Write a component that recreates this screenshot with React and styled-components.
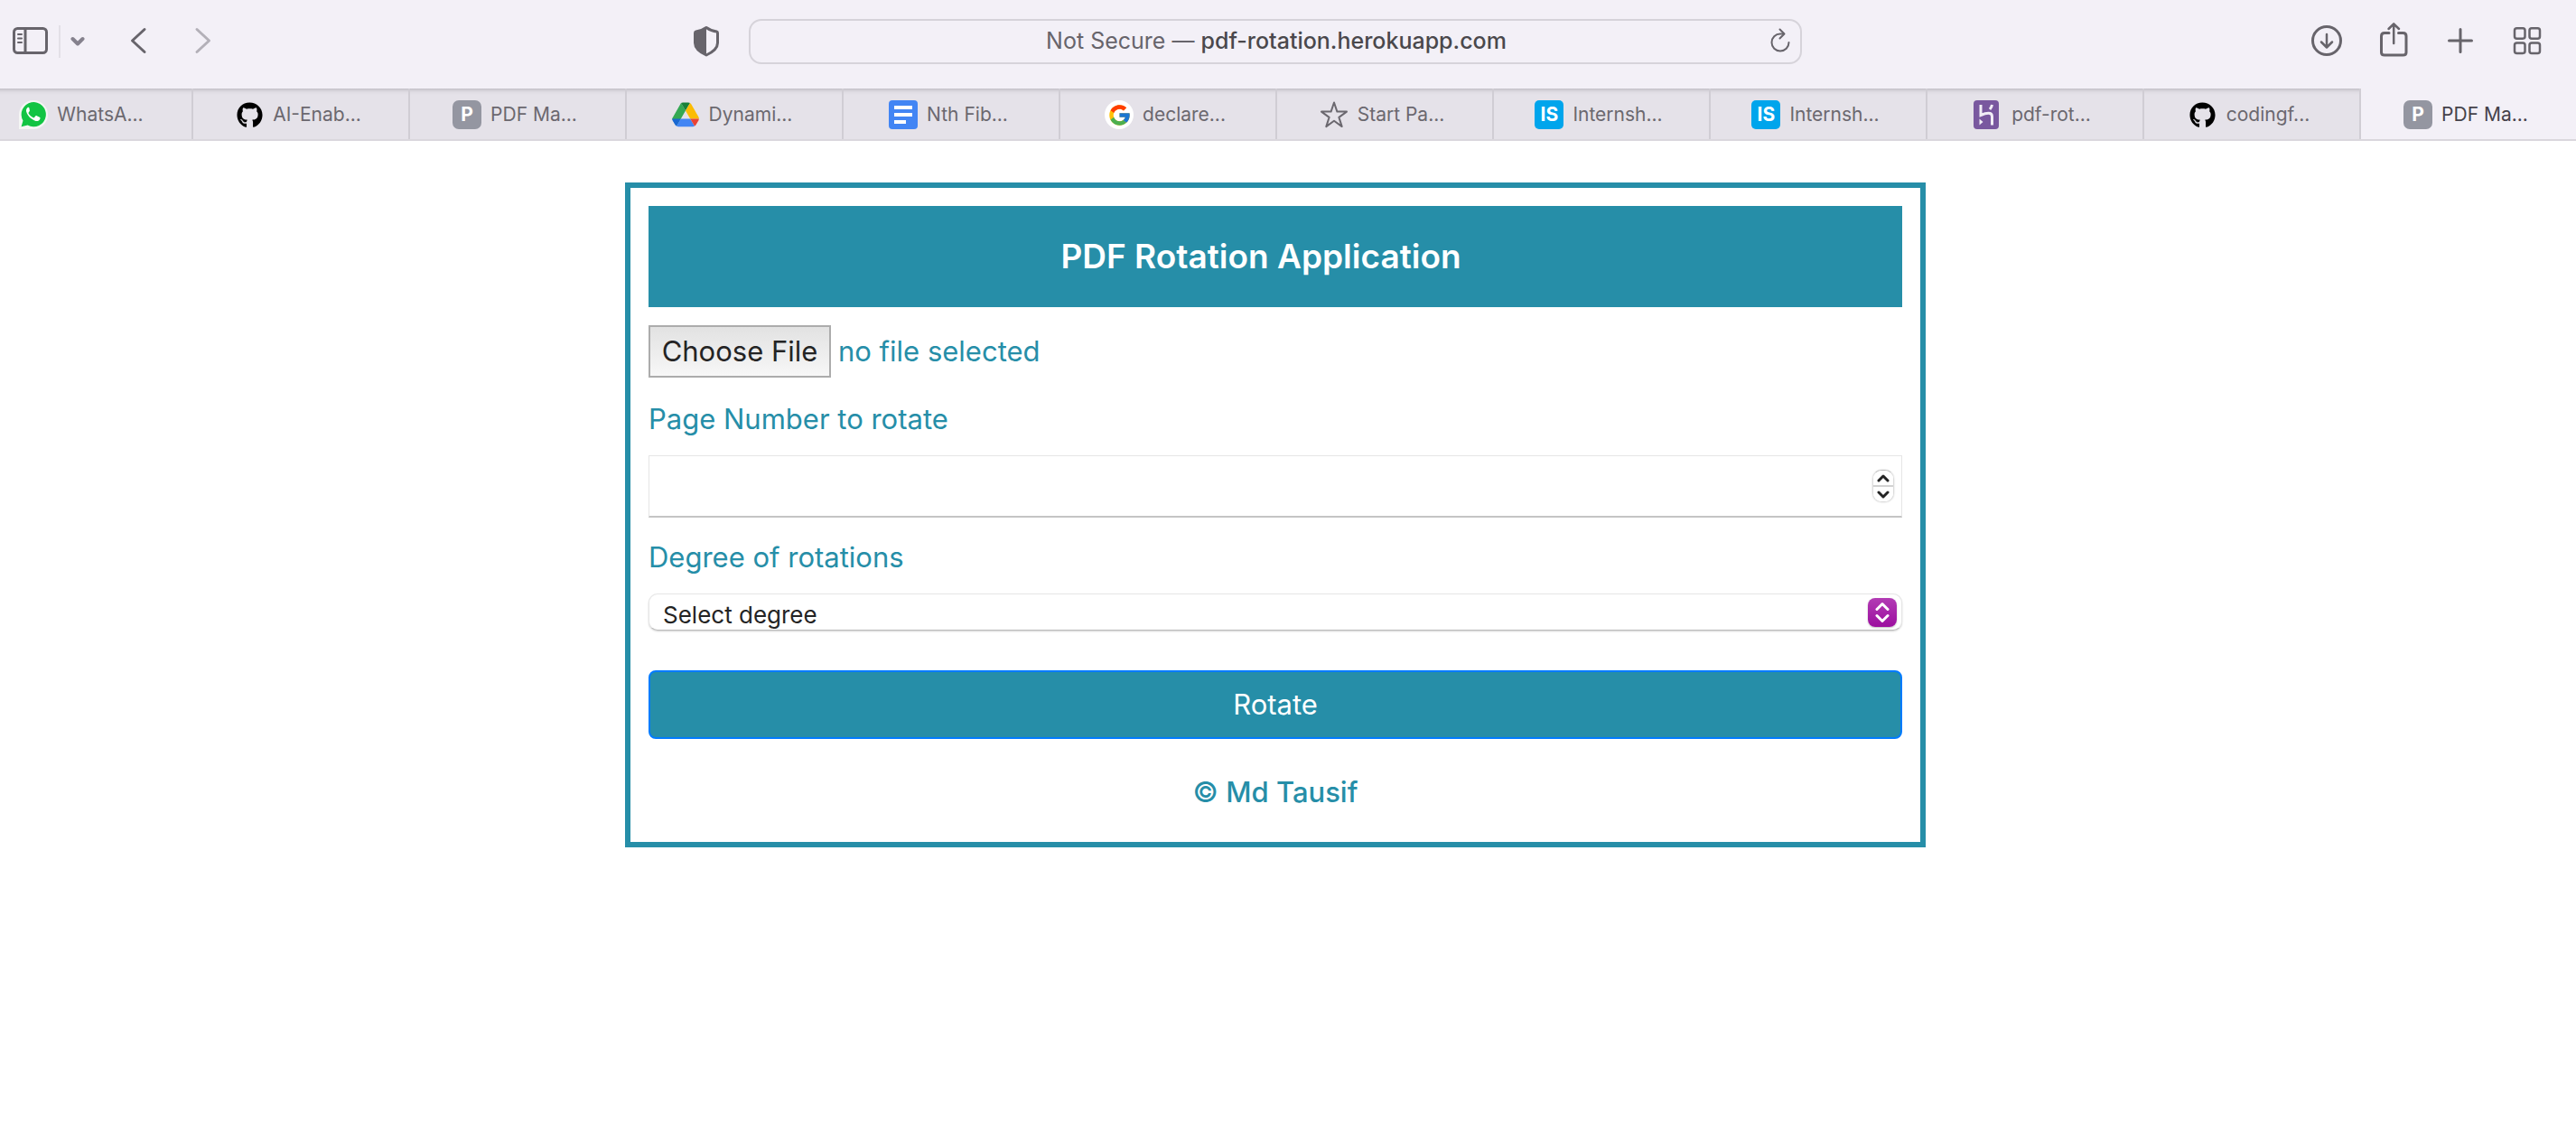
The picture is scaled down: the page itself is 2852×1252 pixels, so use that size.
import React from "react";
import styled, { createGlobalStyle } from "styled-components";
import { FaGithub } from "react-icons/fa";
import { FcGoogle } from "react-icons/fc";

const TEAL = "#268ea8";
const INK = "#67646b";

const GlobalStyle = createGlobalStyle`
  *, *::before, *::after { box-sizing: border-box; }
  body {
    margin: 0;
    background: #fff;
    overflow-x: hidden;
    font-family: Inter, "Liberation Sans", sans-serif;
  }
  button, input, select { font: inherit; margin: 0; }
`;

/* The window's left edge sits just outside the viewport. */
const Window = styled.div`
  margin-left: -28px;
`;

/* ---------- Browser toolbar ---------- */

const Toolbar = styled.header`
  display: grid;
  grid-template-columns: 857fr 1166fr 857fr;
  align-items: center;
  padding: 21px 0 27px;
  background: #f3f0f7;
`;

const ToolGroup = styled.div`
  display: flex;
  align-items: center;
  gap: ${(p) => p.$gap}px;
`;

const LeftTools = styled.div`
  display: flex;
  align-items: center;
  justify-content: space-between;
  padding: 0 32px 0 42px;
`;

const RightTools = styled(ToolGroup)`
  justify-content: flex-end;
  padding-right: 37px;
`;

const ToolButton = styled.button`
  display: flex;
  padding: 0;
  border: 0;
  background: none;
  color: ${(p) => (p.$faded ? "#b3b0b8" : INK)};
`;

const ToolSvg = styled.svg`
  display: block;
  height: 50px;
  fill: none;
  stroke: currentColor;
  stroke-width: ${(p) => p.$weight || 3};
  stroke-linecap: round;
  stroke-linejoin: round;
`;

const Divider = styled.span`
  width: 2px;
  height: 36px;
  background: #e3e0e7;
`;

const AddressBar = styled.div`
  display: flex;
  align-items: center;
  height: 50px;
  padding: 0 10px 0 36px;
  border: 2px solid #d6d3da;
  border-radius: 14px;
`;

const AddressText = styled.button`
  flex: 1;
  padding: 0 0 2px;
  border: 0;
  background: none;
  color: #67646b;
  font-size: 25px;
  line-height: 32px;
  text-align: center;
  white-space: nowrap;
`;

const Host = styled.span`
  color: #4a484c;
  font-weight: 500;
`;

/* ---------- Tabs ---------- */

const TabBar = styled.nav`
  display: flex;
  border-bottom: 2px solid #dad7dd;
  background: #e5e2e9;
`;

const Tab = styled.a`
  display: flex;
  flex: 1 1 0;
  align-items: center;
  justify-content: center;
  gap: 10px;
  min-width: 0;
  height: 56px;
  padding: 2px 6px 0 0;
  border-left: 2px solid #d0cdd4;
  background: ${(p) =>
    p.$active
      ? "#f3f0f7"
      : "linear-gradient(#c2bfc7 0, #d3d0d7 2px, #dfdce3 4px, #e5e2e9 7px)"};
  color: ${(p) => (p.$active ? "#45424a" : "#6b686f")};
  font-size: 21px;
  line-height: 28px;
  text-decoration: none;
  white-space: nowrap;
`;

const Favicon = styled.span`
  display: flex;
  flex: none;
  align-items: center;
  justify-content: center;
  width: 32px;
  height: 32px;
  border-radius: ${(p) => p.$radius || 0}px;
  background: ${(p) => p.$bg || "transparent"};
  color: ${(p) => p.$color || "#fff"};
  font-size: 21px;
  font-weight: 700;
`;

/* ---------- Page ---------- */

const Page = styled.main`
  display: flex;
  justify-content: center;
  padding-top: 46px;
`;

const Card = styled.form`
  display: flex;
  flex-direction: column;
  width: 50%;
  padding: 20px 20px 31px;
  border: 6px solid ${TEAL};
  color: ${TEAL};
  font-size: 31px;
  line-height: 48px;
`;

const Title = styled.h1`
  margin: 0 0 20px;
  padding: 32px 32px 32px 0;
  background: ${TEAL};
  color: #fff;
  font-size: 37px;
  font-weight: 600;
  line-height: 48px;
  text-align: center;
`;

const FileRow = styled.div`
  display: flex;
  align-items: center;
  gap: 8px;
  margin-bottom: 22px;
`;

const FileInput = styled.input`
  width: 202px;
  height: 58px;
  overflow: hidden;
  color: transparent;

  &::file-selector-button {
    width: 202px;
    height: 58px;
    margin: 0;
    padding: 0;
    border: 2px solid #acacac;
    border-radius: 0;
    background: linear-gradient(#e2e2e2, #f7f7f7);
    color: #242424;
    font: inherit;
  }
`;

const Label = styled.label`
  margin-bottom: 16px;
`;

const NumberField = styled.div`
  display: flex;
  align-items: center;
  height: 69px;
  margin-bottom: 20px;
  padding-right: 8px;
  border: 1px solid #e6e6e6;
  border-bottom: 2px solid #c4c4c4;
`;

const NumberInput = styled.input`
  flex: 1;
  min-width: 0;
  height: 100%;
  padding: 0 16px;
  border: 0;
  outline: 0;
  background: none;
  color: #242424;
  appearance: textfield;

  &::-webkit-inner-spin-button { display: none; }
`;

const Stepper = styled.div`
  display: flex;
  flex-direction: column;
  width: 24px;
  height: 36px;
  border: 1px solid #dcdcdc;
  border-top-color: #bdbdbd;
  border-radius: 10px;
  box-shadow: 0 0 2px rgba(0, 0, 0, 0.18);
  overflow: hidden;
`;

const StepButton = styled.button`
  display: flex;
  flex: 1;
  align-items: center;
  justify-content: center;
  padding: 0;
  border: 0;
  background: #fff;
  color: #242424;

  & + & { border-top: 2px solid #d2d2d2; }
`;

const SelectWrap = styled.div`
  position: relative;
  margin-bottom: 44px;
`;

const Select = styled.select`
  display: block;
  width: 100%;
  height: 41px;
  padding: 6px 48px 0 15px;
  border: 1px solid #e6e6e6;
  border-bottom-color: #bcbcbc;
  border-radius: 10px;
  box-shadow: 0 1px 2px rgba(0, 0, 0, 0.18);
  background: #fff;
  color: #242424;
  font-size: 26px;
  line-height: 32px;
  appearance: none;
`;

const SelectBadge = styled.span`
  position: absolute;
  top: 5px;
  right: 6px;
  display: flex;
  align-items: center;
  justify-content: center;
  width: 32px;
  height: 32px;
  border-radius: 8px;
  background: linear-gradient(#b23bb4, #9c0f9f);
  box-shadow: 0 1px 2px rgba(0, 0, 0, 0.25);
  color: #fff;
  pointer-events: none;
`;

const Submit = styled.button`
  height: 76px;
  margin-bottom: 35px;
  padding: 0;
  border: 2px solid #007bff;
  border-radius: 8px;
  background: ${TEAL};
  color: #fff;
`;

const Footer = styled.footer`
  font-weight: 500;
  text-align: center;
`;

/* ---------- Drawings ---------- */

const Chevron = ({ up, width, height, weight }) => (
  <svg
    width={width}
    height={height}
    viewBox={`0 0 ${width} ${height}`}
    fill="none"
    stroke="currentColor"
    strokeWidth={weight}
    strokeLinecap="round"
    strokeLinejoin="round"
  >
    <path
      d={
        up
          ? `M2 ${height - 2} L${width / 2} 2 L${width - 2} ${height - 2}`
          : `M2 2 L${width / 2} ${height - 2} L${width - 2} 2`
      }
    />
  </svg>
);

const WhatsApp = () => (
  <Favicon>
    <svg width="32" height="32" viewBox="0 0 32 32">
      <path d="M0 32V16A16 16 0 1 1 16 32z" fill="#f4f6f4" />
      <path d="M2.6 29.2l1.9-6.600A13.600 13.600 0 1 1 9.600 27.600z" fill="#12c443" />
      <path
        d="M11.4 8.6c-.5-1-1.3-.9-2-.3-1.4 1.3-1.7 3-1.1 4.8 1.5 4.6 5.6 8.5 10.3 9.8 1.9.5 4-.4 4.7-2.2.4-1.1.3-1.6-.5-2l-3.1-1.5c-.6-.3-1-.2-1.4.3l-1.3 1.6c-.3.4-.7.4-1.2.2-2.3-1-4-2.6-5.2-4.7-.3-.5-.2-.8.1-1.2l1-1.3c.3-.4.3-.7.1-1.2z"
        fill="#fff"
      />
    </svg>
  </Favicon>
);

const GitHub = () => (
  <Favicon $color="#000">
    <FaGithub size={29} />
  </Favicon>
);

const PageLetter = () => (
  <Favicon $bg="#9496a1" $radius={7}>
    P
  </Favicon>
);

const Internshala = () => (
  <Favicon $bg="#00a5ec" $radius={5}>
    IS
  </Favicon>
);

const Drive = () => (
  <Favicon>
    <svg width="30" height="28" viewBox="0 0 30 28">
      <path d="M10 1l5 8.500L5.500 26Q4 25.500 3.200 24L.6 19.500Q0 18.500.3 18z" fill="#34a853" />
      <path d="M10 1Q10.800.5 12 .5h6q1.200 0 2 .5l-5 8.500z" fill="#188038" />
      <path d="M20 1q.8.500 1.400 1.500L29.400 16.500q.5 1 .4 2H20.200L15 9.500z" fill="#fbbc04" />
      <path d="M.2 18.500h9.600L5 26.500q-1-.5-1.600-1.500L.7 20.500Q.2 19.500.2 18.500z" fill="#1967d2" />
      <path d="M9.800 18.500h10.400l4.800 8q-.8.800-2 .8H7q-1.200 0-2-.8z" fill="#4285f4" />
      <path d="M20.200 18.500h9.600q0 1-.5 2l-2.700 4.500q-.6 1-1.600 1.500z" fill="#ea4335" />
    </svg>
  </Favicon>
);

const Docs = () => (
  <Favicon $bg="#4285f4" $radius={4}>
    <svg width="20" height="20" viewBox="0 0 20 20" fill="#fff">
      <path d="M0 0h20v4H0zM0 8h20v4H0zM0 16h13v4H0z" />
    </svg>
  </Favicon>
);

const Google = () => (
  <Favicon $bg="#fff" $radius={16}>
    <FcGoogle size={27} />
  </Favicon>
);

const Star = () => (
  <Favicon>
    <svg width="32" height="32" viewBox="0 0 32 32" fill="none" stroke="#6b686f" strokeWidth="2" strokeLinejoin="round">
      <path d="M16 2.500l3.400 10.100H30l-8.600 6.300 3.300 10.200L16 22.800l-8.700 6.300 3.300-10.200L2 12.600h10.600z" />
    </svg>
  </Favicon>
);

const Heroku = () => (
  <Favicon>
    <svg width="32" height="32" viewBox="0 0 32 32">
      <rect width="28" height="32" rx="4" fill="#79589f" />
      <path
        d="M8 5v11.500c4-1.700 6-2.200 8.500-2.200 2.800 0 4 1.400 4 3.700V27.500M20.500 5c-.3 1.800-1.200 3.500-2.500 5"
        fill="none"
        stroke="#f1eef6"
        strokeWidth="3"
      />
      <path d="M6.500 20.500v7l4-3.500z" fill="#f1eef6" />
    </svg>
  </Favicon>
);

const TABS = [
  { icon: WhatsApp, title: "WhatsA..." },
  { icon: GitHub, title: "AI-Enab..." },
  { icon: PageLetter, title: "PDF Ma..." },
  { icon: Drive, title: "Dynami..." },
  { icon: Docs, title: "Nth Fib..." },
  { icon: Google, title: "declare..." },
  { icon: Star, title: "Start Pa..." },
  { icon: Internshala, title: "Internsh..." },
  { icon: Internshala, title: "Internsh..." },
  { icon: Heroku, title: "pdf-rot..." },
  { icon: GitHub, title: "codingf..." },
  { icon: PageLetter, title: "PDF Ma...", active: true },
];

export default function App() {
  const pageNumber = React.useRef(null);

  return (
    <Window>
      <GlobalStyle />
      <Toolbar>
        <LeftTools>
          <ToolGroup $gap={50}>
            <ToolGroup $gap={11}>
              <ToolButton aria-label="Show sidebar">
                <ToolSvg width="40" viewBox="0 0 40 50">
                  <rect x="1.500" y="10.500" width="36" height="27" rx="4" />
                  <path d="M14 10.500v27" />
                  <path d="M6 17h4M6 21.500h4M6 26h4" strokeWidth="2" />
                </ToolSvg>
              </ToolButton>
              <Divider />
              <ToolButton aria-label="Tab groups">
                <ToolSvg width="16" viewBox="0 0 16 50" $weight={4}>
                  <path d="M2.500 22l5.500 5.500 5.500-5.500" stroke="#85818d" />
                </ToolSvg>
              </ToolButton>
            </ToolGroup>
            <ToolButton aria-label="Back">
              <ToolSvg width="20" viewBox="0 0 20 50">
                <path d="M16 11.500L2.500 24 16 36.500" />
              </ToolSvg>
            </ToolButton>
            <ToolButton aria-label="Forward" $faded>
              <ToolSvg width="20" viewBox="0 0 20 50">
                <path d="M4 11.500L17.500 24 4 36.500" />
              </ToolSvg>
            </ToolButton>
          </ToolGroup>
          <ToolButton aria-label="Privacy report">
            <ToolSvg width="30" viewBox="0 0 30 50">
              <path d="M15 9.500c4 2.800 8 4.200 11.500 4.500q1 .2 1 1.500v11c0 6-6 10.500-12.500 13.500C8.500 37 2.500 32.500 2.500 26.500v-11q0-1.300 1-1.500C7 13.700 11 12.300 15 9.500z" />
              <path d="M15 9.500V40C8.500 37 2.500 32.500 2.500 26.500v-11q0-1.300 1-1.500C7 13.700 11 12.300 15 9.500z" fill="currentColor" stroke="none" />
            </ToolSvg>
          </ToolButton>
        </LeftTools>

        <AddressBar>
          <AddressText>
            Not Secure — <Host>pdf-rotation.herokuapp.com</Host>
          </AddressText>
          <ToolButton aria-label="Reload">
            <ToolSvg width="24" viewBox="0 0 24 50" $weight={2}>
              <path d="M21.500 26a9.500 9.500 0 1 1-9.500-9.500h4" />
              <path d="M11.500 11.500l5 5-5 5" />
            </ToolSvg>
          </ToolButton>
        </AddressBar>

        <RightTools $gap={40}>
          <ToolButton aria-label="Downloads">
            <ToolSvg width="34" viewBox="0 0 34 50">
              <circle cx="17" cy="24" r="15.500" />
              <path d="M17 17v14M11 25.500l6 6 6-6" strokeWidth="2.500" />
            </ToolSvg>
          </ToolButton>
          <ToolButton aria-label="Share">
            <ToolSvg width="34" viewBox="0 0 34 50">
              <path d="M12 15.500H7q-3.500 0-3.500 3.500v18q0 3 3.500 3h20.500q3.500 0 3.500-3V19q0-3.500-3.500-3.500H22.500" />
              <path d="M17.200 27V5.500M11.500 11l5.700-5.500L23 11" strokeWidth="2.500" />
            </ToolSvg>
          </ToolButton>
          <ToolButton aria-label="New tab">
            <ToolSvg width="34" viewBox="0 0 34 50">
              <path d="M17 11.500v25M4.500 24h25" />
            </ToolSvg>
          </ToolButton>
          <ToolButton aria-label="Tab overview">
            <ToolSvg width="34" viewBox="0 0 34 50" $weight={2.5}>
              <rect x="3" y="10.200" width="11.500" height="11.500" rx="2.500" />
              <rect x="19.500" y="10.200" width="11.500" height="11.500" rx="2.500" />
              <rect x="3" y="26.500" width="11.500" height="11.500" rx="2.500" />
              <rect x="19.500" y="26.500" width="11.500" height="11.500" rx="2.500" />
            </ToolSvg>
          </ToolButton>
        </RightTools>
      </Toolbar>

      <TabBar>
        {TABS.map(({ icon: Icon, title, active }, i) => (
          <Tab key={i} href="#" $active={active} aria-current={active ? "page" : undefined}>
            <Icon />
            {title}
          </Tab>
        ))}
      </TabBar>

      <Page>
        <Card onSubmit={(e) => e.preventDefault()}>
          <Title>PDF Rotation Application</Title>
          <FileRow>
            <FileInput type="file" id="pdf" accept="application/pdf" aria-label="PDF file" />
            <label htmlFor="pdf">no file selected</label>
          </FileRow>
          <Label htmlFor="page">Page Number to rotate</Label>
          <NumberField>
            <NumberInput type="number" id="page" ref={pageNumber} />
            <Stepper>
              <StepButton type="button" aria-label="Increase" onClick={() => pageNumber.current.stepUp()}>
                <Chevron up width={14} height={9} weight={3} />
              </StepButton>
              <StepButton type="button" aria-label="Decrease" onClick={() => pageNumber.current.stepDown()}>
                <Chevron width={14} height={9} weight={3} />
              </StepButton>
            </Stepper>
          </NumberField>
          <Label htmlFor="degree">Degree of rotations</Label>
          <SelectWrap>
            <Select id="degree" defaultValue="">
              <option value="">Select degree</option>
              <option value="90">90</option>
              <option value="180">180</option>
              <option value="270">270</option>
            </Select>
            <SelectBadge>
              <svg width="16" height="24" viewBox="0 0 16 24" fill="none" stroke="#fff" strokeWidth="3" strokeLinecap="round" strokeLinejoin="round">
                <path d="M2 8.500L8 2.500l6 6M2 15.500l6 6 6-6" />
              </svg>
            </SelectBadge>
          </SelectWrap>
          <Submit type="submit">Rotate</Submit>
          <Footer>© Md Tausif</Footer>
        </Card>
      </Page>
    </Window>
  );
}
